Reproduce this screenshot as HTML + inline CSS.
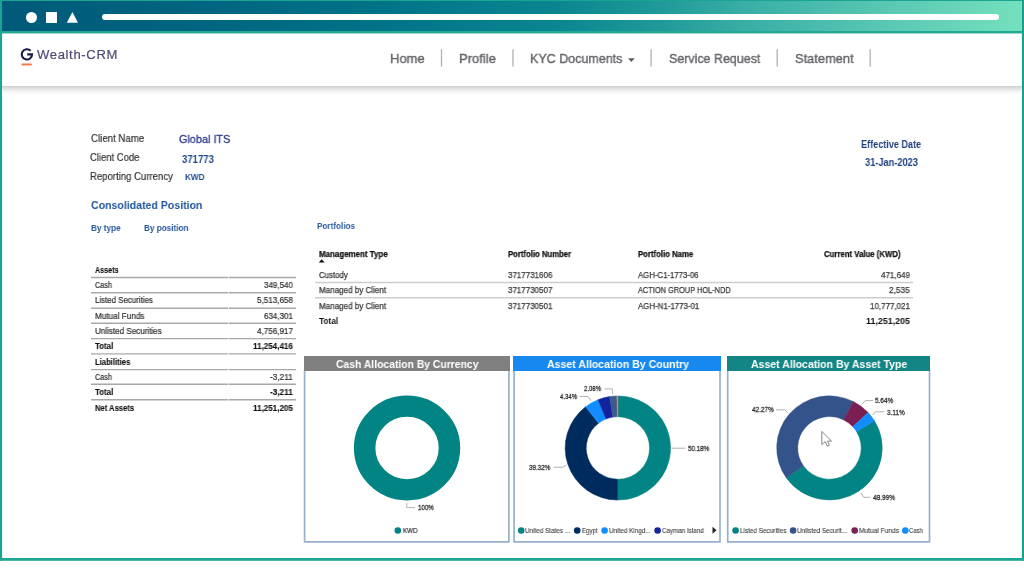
<!DOCTYPE html><html><head><meta charset="utf-8"><style>
*{margin:0;padding:0;box-sizing:border-box}
html,body{width:1024px;height:576px;overflow:hidden;background:#fff}
body{position:relative;font-family:"Liberation Sans",sans-serif}
.t{position:absolute;white-space:nowrap;transform-origin:0 0;will-change:transform}
.a{position:absolute}
</style></head><body><svg class="a" style="left:0;top:0" width="1024" height="576"><rect x="0" y="0" width="1024" height="1.4" fill="#1aa593"/><rect x="0" y="0" width="2.1" height="560.8" fill="#1aa593"/><rect x="1021.9" y="0" width="2.1" height="560.8" fill="#1a9f8f"/><rect x="0" y="558" width="1024" height="2.8" fill="#1ea694"/></svg>
<div class="a" style="left:2px;top:1.3px;width:1020px;height:30px;background:linear-gradient(90deg,#005a79 0%,#006582 20%,#007087 34%,#0a8590 54%,#1e9898 64%,#3aaea6 73%,#5ccab4 88%,#74e0bd 100%)"></div>
<div class="a" style="left:2px;top:30.8px;width:1020px;height:2.2px;background:#22a996"></div>
<div class="a" style="left:2px;top:33px;width:1020px;height:0.7px;background:#9ad6cc"></div>
<div class="a" style="left:26px;top:11.8px;width:11px;height:11px;border-radius:50%;background:#fff"></div>
<div class="a" style="left:46.2px;top:11.9px;width:11.2px;height:10.8px;background:#fff"></div>
<svg class="a" style="left:0;top:0" width="120" height="36"><polygon points="72.4,11.9 78,22.8 66.8,22.8" fill="#fff"/></svg>
<div class="a" style="left:102.2px;top:14.1px;width:897.3px;height:6px;border-radius:3px;background:#fff"></div>
<div class="a" style="left:2px;top:85.8px;width:1020px;height:9px;background:linear-gradient(180deg,#cdcdd2 0%,#dcdce0 20%,#ececee 45%,#f8f8f9 70%,#fff 100%)"></div>
<svg class="a" style="left:0;top:0" width="140" height="90"><path d="M30.6,50.8 A5.15,5.15 0 1 0 32.05,54.4 L27.2,54.4" fill="none" stroke="#1a1842" stroke-width="2.1"/><rect x="21.4" y="63.5" width="10.6" height="2.1" rx="1" fill="#f37b45"/></svg>
<div class="t" style="left:37.20px;top:48.43px;font-size:13.08px;line-height:13.08px;color:#4d4a72;font-weight:normal;transform:scaleX(1.0000);-webkit-text-stroke:0.20px #4d4a72;letter-spacing:0.641px;">Wealth-CRM</div>
<div class="t" style="left:390.25px;top:51.68px;font-size:13.37px;line-height:13.37px;color:#646469;font-weight:normal;transform:scaleX(0.9712);-webkit-text-stroke:0.40px #646469;">Home</div>
<div class="t" style="left:459.40px;top:51.68px;font-size:13.37px;line-height:13.37px;color:#646469;font-weight:normal;transform:scaleX(0.9734);-webkit-text-stroke:0.40px #646469;">Profile</div>
<div class="t" style="left:530.30px;top:51.68px;font-size:13.37px;line-height:13.37px;color:#646469;font-weight:normal;transform:scaleX(0.9358);-webkit-text-stroke:0.40px #646469;">KYC Documents</div>
<div class="t" style="left:668.70px;top:51.68px;font-size:13.37px;line-height:13.37px;color:#646469;font-weight:normal;transform:scaleX(0.9316);-webkit-text-stroke:0.40px #646469;">Service Request</div>
<div class="t" style="left:794.80px;top:51.68px;font-size:13.37px;line-height:13.37px;color:#646469;font-weight:normal;transform:scaleX(0.9614);-webkit-text-stroke:0.40px #646469;">Statement</div>
<svg class="a" style="left:0;top:0" width="900" height="80"><polygon points="628.1,58.3 634.7,58.3 631.4,62" fill="#5a5a5e"/></svg>
<svg class="a" style="left:0;top:0" width="1024" height="80"><line x1="441.5" y1="49.2" x2="441.5" y2="66.5" stroke="#b0b0b3" stroke-width="1.3"/><line x1="513.0" y1="49.2" x2="513.0" y2="66.5" stroke="#b0b0b3" stroke-width="1.3"/><line x1="651.1" y1="49.2" x2="651.1" y2="66.5" stroke="#b0b0b3" stroke-width="1.3"/><line x1="777.2" y1="49.2" x2="777.2" y2="66.5" stroke="#b0b0b3" stroke-width="1.3"/><line x1="870.2" y1="49.2" x2="870.2" y2="66.5" stroke="#b0b0b3" stroke-width="1.3"/></svg>
<div class="t" style="left:90.60px;top:132.92px;font-size:10.61px;line-height:10.61px;color:#333333;font-weight:normal;transform:scaleX(0.9113);-webkit-text-stroke:0.20px #333333;">Client Name</div>
<div class="t" style="left:179.30px;top:133.60px;font-size:11.34px;line-height:11.34px;color:#2b3889;font-weight:normal;transform:scaleX(0.9579);-webkit-text-stroke:0.30px #2b3889;">Global ITS</div>
<div class="t" style="left:90.30px;top:152.37px;font-size:10.90px;line-height:10.90px;color:#333333;font-weight:normal;transform:scaleX(0.8691);-webkit-text-stroke:0.20px #333333;">Client Code</div>
<div class="t" style="left:181.70px;top:154.89px;font-size:10.17px;line-height:10.17px;color:#1f4a88;font-weight:bold;transform:scaleX(0.9425);">371773</div>
<div class="t" style="left:89.90px;top:170.92px;font-size:10.61px;line-height:10.61px;color:#333333;font-weight:normal;transform:scaleX(0.9006);-webkit-text-stroke:0.20px #333333;">Reporting Currency</div>
<div class="t" style="left:184.80px;top:172.95px;font-size:9.16px;line-height:9.16px;color:#1f4f8f;font-weight:bold;transform:scaleX(0.8918);">KWD</div>
<div class="t" style="left:90.60px;top:199.36px;font-size:11.63px;line-height:11.63px;color:#1f5599;font-weight:bold;transform:scaleX(0.9084);">Consolidated Position</div>
<div class="t" style="left:91.40px;top:223.63px;font-size:9.30px;line-height:9.30px;color:#25579b;font-weight:bold;transform:scaleX(0.8810);">By type</div>
<div class="t" style="left:144.30px;top:223.63px;font-size:9.30px;line-height:9.30px;color:#25579b;font-weight:bold;transform:scaleX(0.8767);">By position</div>
<div class="t" style="left:861.25px;top:139.33px;font-size:11.19px;line-height:11.19px;color:#1e3f7c;font-weight:bold;transform:scaleX(0.8126);">Effective Date</div>
<div class="t" style="left:864.50px;top:157.59px;font-size:10.17px;line-height:10.17px;color:#1e3f7c;font-weight:bold;transform:scaleX(0.9097);">31-Jan-2023</div>
<div class="t" style="left:95.25px;top:265.86px;font-size:8.43px;line-height:8.43px;color:#111;font-weight:bold;transform:scaleX(0.8481);-webkit-text-stroke:0.10px #111;">Assets</div>
<div class="t" style="left:95.25px;top:281.16px;font-size:8.43px;line-height:8.43px;color:#2e2e2e;font-weight:normal;transform:scaleX(0.8614);-webkit-text-stroke:0.20px #2e2e2e;">Cash</div>
<div class="t" style="left:264.00px;top:281.16px;font-size:8.43px;line-height:8.43px;color:#2e2e2e;font-weight:normal;transform:scaleX(0.9483);-webkit-text-stroke:0.20px #2e2e2e;">349,540</div>
<div class="t" style="left:95.25px;top:296.46px;font-size:8.43px;line-height:8.43px;color:#2e2e2e;font-weight:normal;transform:scaleX(0.9369);-webkit-text-stroke:0.20px #2e2e2e;">Listed Securities</div>
<div class="t" style="left:256.90px;top:296.46px;font-size:8.43px;line-height:8.43px;color:#2e2e2e;font-weight:normal;transform:scaleX(0.9598);-webkit-text-stroke:0.20px #2e2e2e;">5,513,658</div>
<div class="t" style="left:95.25px;top:311.76px;font-size:8.43px;line-height:8.43px;color:#2e2e2e;font-weight:normal;transform:scaleX(0.9681);-webkit-text-stroke:0.20px #2e2e2e;">Mutual Funds</div>
<div class="t" style="left:264.00px;top:311.76px;font-size:8.43px;line-height:8.43px;color:#2e2e2e;font-weight:normal;transform:scaleX(0.9483);-webkit-text-stroke:0.20px #2e2e2e;">634,301</div>
<div class="t" style="left:95.25px;top:327.06px;font-size:8.43px;line-height:8.43px;color:#2e2e2e;font-weight:normal;transform:scaleX(0.9576);-webkit-text-stroke:0.20px #2e2e2e;">Unlisted Securities</div>
<div class="t" style="left:256.90px;top:327.06px;font-size:8.43px;line-height:8.43px;color:#2e2e2e;font-weight:normal;transform:scaleX(0.9598);-webkit-text-stroke:0.20px #2e2e2e;">4,756,917</div>
<div class="t" style="left:95.25px;top:342.36px;font-size:8.43px;line-height:8.43px;color:#111;font-weight:bold;transform:scaleX(0.9304);-webkit-text-stroke:0.10px #111;">Total</div>
<div class="t" style="left:253.00px;top:342.36px;font-size:8.43px;line-height:8.43px;color:#111;font-weight:bold;transform:scaleX(0.9562);-webkit-text-stroke:0.10px #111;">11,254,416</div>
<div class="t" style="left:95.25px;top:357.66px;font-size:8.43px;line-height:8.43px;color:#111;font-weight:bold;transform:scaleX(0.9066);-webkit-text-stroke:0.10px #111;">Liabilities</div>
<div class="t" style="left:95.25px;top:372.96px;font-size:8.43px;line-height:8.43px;color:#2e2e2e;font-weight:normal;transform:scaleX(0.8614);-webkit-text-stroke:0.20px #2e2e2e;">Cash</div>
<div class="t" style="left:270.10px;top:372.96px;font-size:8.43px;line-height:8.43px;color:#2e2e2e;font-weight:normal;transform:scaleX(0.9796);-webkit-text-stroke:0.20px #2e2e2e;">-3,211</div>
<div class="t" style="left:95.25px;top:388.26px;font-size:8.43px;line-height:8.43px;color:#111;font-weight:bold;transform:scaleX(0.9304);-webkit-text-stroke:0.10px #111;">Total</div>
<div class="t" style="left:270.10px;top:388.26px;font-size:8.43px;line-height:8.43px;color:#111;font-weight:bold;transform:scaleX(0.9729);-webkit-text-stroke:0.10px #111;">-3,211</div>
<div class="t" style="left:95.25px;top:403.56px;font-size:8.43px;line-height:8.43px;color:#111;font-weight:bold;transform:scaleX(0.9049);-webkit-text-stroke:0.10px #111;">Net Assets</div>
<div class="t" style="left:253.00px;top:403.56px;font-size:8.43px;line-height:8.43px;color:#111;font-weight:bold;transform:scaleX(0.9562);-webkit-text-stroke:0.10px #111;">11,251,205</div>
<svg class="a" style="left:0;top:0" width="1024" height="576"><line x1="91" y1="277.5" x2="228" y2="277.5" stroke="#a8a8a8" stroke-width="1.4"/><line x1="228.7" y1="277.5" x2="296" y2="277.5" stroke="#a8a8a8" stroke-width="1.4"/><line x1="91" y1="292.8" x2="228" y2="292.8" stroke="#a8a8a8" stroke-width="1.4"/><line x1="228.7" y1="292.8" x2="296" y2="292.8" stroke="#a8a8a8" stroke-width="1.4"/><line x1="91" y1="308.2" x2="228" y2="308.2" stroke="#a8a8a8" stroke-width="1.4"/><line x1="228.7" y1="308.2" x2="296" y2="308.2" stroke="#a8a8a8" stroke-width="1.4"/><line x1="91" y1="323.2" x2="228" y2="323.2" stroke="#a8a8a8" stroke-width="1.4"/><line x1="228.7" y1="323.2" x2="296" y2="323.2" stroke="#a8a8a8" stroke-width="1.4"/><line x1="91" y1="338.6" x2="228" y2="338.6" stroke="#a8a8a8" stroke-width="1.4"/><line x1="228.7" y1="338.6" x2="296" y2="338.6" stroke="#a8a8a8" stroke-width="1.4"/><line x1="91" y1="353.9" x2="228" y2="353.9" stroke="#a8a8a8" stroke-width="1.4"/><line x1="228.7" y1="353.9" x2="296" y2="353.9" stroke="#a8a8a8" stroke-width="1.4"/><line x1="91" y1="369.6" x2="228" y2="369.6" stroke="#a8a8a8" stroke-width="1.4"/><line x1="228.7" y1="369.6" x2="296" y2="369.6" stroke="#a8a8a8" stroke-width="1.4"/><line x1="91" y1="384.3" x2="228" y2="384.3" stroke="#a8a8a8" stroke-width="1.4"/><line x1="228.7" y1="384.3" x2="296" y2="384.3" stroke="#a8a8a8" stroke-width="1.4"/><line x1="91" y1="399.7" x2="228" y2="399.7" stroke="#a8a8a8" stroke-width="1.4"/><line x1="228.7" y1="399.7" x2="296" y2="399.7" stroke="#a8a8a8" stroke-width="1.4"/></svg>
<div class="t" style="left:317.30px;top:221.20px;font-size:9.45px;line-height:9.45px;color:#2a5b9b;font-weight:bold;transform:scaleX(0.8641);">Portfolios</div>
<div class="t" style="left:318.75px;top:250.16px;font-size:8.43px;line-height:8.43px;color:#111;font-weight:bold;transform:scaleX(0.9428);-webkit-text-stroke:0.25px #111;">Management Type</div>
<div class="t" style="left:508.20px;top:250.16px;font-size:8.43px;line-height:8.43px;color:#111;font-weight:bold;transform:scaleX(0.9165);-webkit-text-stroke:0.25px #111;">Portfolio Number</div>
<div class="t" style="left:638.10px;top:250.16px;font-size:8.43px;line-height:8.43px;color:#111;font-weight:bold;transform:scaleX(0.9207);-webkit-text-stroke:0.25px #111;">Portfolio Name</div>
<div class="t" style="left:823.75px;top:250.16px;font-size:8.43px;line-height:8.43px;color:#111;font-weight:bold;transform:scaleX(0.9234);-webkit-text-stroke:0.25px #111;">Current Value (KWD)</div>
<svg class="a" style="left:0;top:0" width="400" height="270"><polygon points="321.7,259.2 324.7,262.4 318.7,262.4" fill="#111"/></svg>
<div class="t" style="left:318.75px;top:270.76px;font-size:8.43px;line-height:8.43px;color:#3a3a3a;font-weight:normal;transform:scaleX(0.9298);-webkit-text-stroke:0.25px #3a3a3a;">Custody</div>
<div class="t" style="left:508.20px;top:270.76px;font-size:8.43px;line-height:8.43px;color:#3a3a3a;font-weight:normal;transform:scaleX(0.9469);-webkit-text-stroke:0.25px #3a3a3a;">3717731606</div>
<div class="t" style="left:638.10px;top:270.76px;font-size:8.43px;line-height:8.43px;color:#3a3a3a;font-weight:normal;transform:scaleX(0.9238);-webkit-text-stroke:0.25px #3a3a3a;">AGH-C1-1773-06</div>
<div class="t" style="left:881.00px;top:270.76px;font-size:8.43px;line-height:8.43px;color:#3a3a3a;font-weight:normal;transform:scaleX(0.9516);-webkit-text-stroke:0.25px #3a3a3a;">471,649</div>
<div class="t" style="left:318.75px;top:286.16px;font-size:8.43px;line-height:8.43px;color:#3a3a3a;font-weight:normal;transform:scaleX(0.9539);-webkit-text-stroke:0.25px #3a3a3a;">Managed by Client</div>
<div class="t" style="left:508.20px;top:286.16px;font-size:8.43px;line-height:8.43px;color:#3a3a3a;font-weight:normal;transform:scaleX(0.9469);-webkit-text-stroke:0.25px #3a3a3a;">3717730507</div>
<div class="t" style="left:638.10px;top:286.16px;font-size:8.43px;line-height:8.43px;color:#3a3a3a;font-weight:normal;transform:scaleX(0.8780);-webkit-text-stroke:0.25px #3a3a3a;">ACTION GROUP HOL-NDD</div>
<div class="t" style="left:889.40px;top:286.16px;font-size:8.43px;line-height:8.43px;color:#3a3a3a;font-weight:normal;transform:scaleX(0.9767);-webkit-text-stroke:0.25px #3a3a3a;">2,535</div>
<div class="t" style="left:318.75px;top:301.56px;font-size:8.43px;line-height:8.43px;color:#3a3a3a;font-weight:normal;transform:scaleX(0.9539);-webkit-text-stroke:0.25px #3a3a3a;">Managed by Client</div>
<div class="t" style="left:508.20px;top:301.56px;font-size:8.43px;line-height:8.43px;color:#3a3a3a;font-weight:normal;transform:scaleX(0.9469);-webkit-text-stroke:0.25px #3a3a3a;">3717730501</div>
<div class="t" style="left:638.10px;top:301.56px;font-size:8.43px;line-height:8.43px;color:#3a3a3a;font-weight:normal;transform:scaleX(0.9345);-webkit-text-stroke:0.25px #3a3a3a;">AGH-N1-1773-01</div>
<div class="t" style="left:870.00px;top:301.56px;font-size:8.43px;line-height:8.43px;color:#3a3a3a;font-weight:normal;transform:scaleX(0.9480);-webkit-text-stroke:0.25px #3a3a3a;">10,777,021</div>
<div class="t" style="left:318.75px;top:317.17px;font-size:9.01px;line-height:9.01px;color:#111;font-weight:bold;transform:scaleX(0.9231);">Total</div>
<div class="t" style="left:866.00px;top:317.17px;font-size:9.01px;line-height:9.01px;color:#111;font-weight:bold;transform:scaleX(0.9864);">11,251,205</div>
<svg class="a" style="left:0;top:0" width="1024" height="576"><line x1="315" y1="282.4" x2="913" y2="282.4" stroke="#cdcdcd" stroke-width="1.5"/><line x1="315" y1="297.7" x2="913" y2="297.7" stroke="#cdcdcd" stroke-width="1.5"/></svg>
<svg class="a" style="left:0;top:0" width="1024" height="576"><path d="M304.6,370 L304.6,541.8 L508.9,541.8 L508.9,370" fill="none" stroke="#98b0cb" stroke-width="1.7"/></svg>
<div class="a" style="left:303.8px;top:355.8px;width:205.9px;height:15px;background:#808080"></div>
<div class="t" style="left:335.90px;top:358.52px;font-size:10.90px;line-height:10.90px;color:#fff;font-weight:bold;transform:scaleX(0.9511);">Cash Allocation By Currency</div>
<svg class="a" style="left:0;top:0" width="1024" height="576"><path d="M514.1,370 L514.1,541.8 L720.0,541.8 L720.0,370" fill="none" stroke="#98b0cb" stroke-width="1.7"/></svg>
<div class="a" style="left:513.3px;top:355.8px;width:207.5px;height:15px;background:#1688f0"></div>
<div class="t" style="left:547.00px;top:358.52px;font-size:10.90px;line-height:10.90px;color:#fff;font-weight:bold;transform:scaleX(0.9688);">Asset Allocation By Country</div>
<svg class="a" style="left:0;top:0" width="1024" height="576"><path d="M727.7,370 L727.7,541.8 L929.5,541.8 L929.5,370" fill="none" stroke="#98b0cb" stroke-width="1.7"/></svg>
<div class="a" style="left:726.9px;top:355.8px;width:203.4px;height:15px;background:#138585"></div>
<div class="t" style="left:751.30px;top:358.52px;font-size:10.90px;line-height:10.90px;color:#fff;font-weight:bold;transform:scaleX(0.9657);">Asset Allocation By Asset Type</div>
<svg class="a" style="left:0;top:0" width="1024" height="576"><g transform="translate(407.05,448.0) scale(1,0.986) translate(-407.05,-448.0)"><circle cx="407.05" cy="448.0" r="42.4" fill="none" stroke="#038484" stroke-width="21.5"/></g><g transform="translate(618.0,448.0) scale(1,0.986) translate(-618.0,-448.0)"><path d="M618.00,395.15 A52.85,52.85 0 1 1 617.40,500.85 L617.64,479.75 A31.75,31.75 0 1 0 618.00,416.25 Z" fill="#038484" stroke="#038484" stroke-width="0.5"/><path d="M617.40,500.85 A52.85,52.85 0 0 1 585.61,406.24 L598.54,422.91 A31.75,31.75 0 0 0 617.64,479.75 Z" fill="#002b5e" stroke="#002b5e" stroke-width="0.5"/><path d="M585.61,406.24 A52.85,52.85 0 0 1 598.05,399.06 L606.02,418.60 A31.75,31.75 0 0 0 598.54,422.91 Z" fill="#118dff" stroke="#118dff" stroke-width="0.5"/><path d="M598.05,399.06 A52.85,52.85 0 0 1 609.54,395.83 L612.92,416.66 A31.75,31.75 0 0 0 606.02,418.60 Z" fill="#12239e" stroke="#12239e" stroke-width="0.5"/><path d="M609.54,395.83 A52.85,52.85 0 0 1 616.87,395.16 L617.32,416.26 A31.75,31.75 0 0 0 612.92,416.66 Z" fill="#3b5a8e" stroke="#3b5a8e" stroke-width="0.5"/><path d="M616.87,395.16 A52.85,52.85 0 0 1 618.00,395.15 L618.00,416.25 A31.75,31.75 0 0 0 617.32,416.26 Z" fill="#e0805a" stroke="#e0805a" stroke-width="0.5"/></g><g transform="translate(829.45,447.9) scale(1,0.986) translate(-829.45,-447.9)"><path d="M874.38,420.26 A52.75,52.75 0 0 1 786.36,478.33 L803.52,466.22 A31.75,31.75 0 0 0 856.49,431.26 Z" fill="#038484" stroke="#038484" stroke-width="0.5"/><path d="M786.36,478.33 A52.75,52.75 0 0 1 853.35,400.87 L843.83,419.59 A31.75,31.75 0 0 0 803.52,466.22 Z" fill="#34538a" stroke="#34538a" stroke-width="0.5"/><path d="M853.35,400.87 A52.75,52.75 0 0 1 868.18,412.09 L852.76,426.34 A31.75,31.75 0 0 0 843.83,419.59 Z" fill="#7b1f52" stroke="#7b1f52" stroke-width="0.5"/><path d="M868.18,412.09 A52.75,52.75 0 0 1 874.40,420.29 L856.50,431.28 A31.75,31.75 0 0 0 852.76,426.34 Z" fill="#118dff" stroke="#118dff" stroke-width="0.5"/></g><polyline points="406.8,502.8 406.8,507.6 415,507.6" fill="none" stroke="#a8a8a8" stroke-width="0.9"/><polyline points="671.5,448.2 685.2,448.2" fill="none" stroke="#a8a8a8" stroke-width="0.9"/><polyline points="553.5,467.3 562.5,467.3 566.2,465.2" fill="none" stroke="#a8a8a8" stroke-width="0.9"/><polyline points="579.5,396.4 588,396.4 591,400.5" fill="none" stroke="#a8a8a8" stroke-width="0.9"/><polyline points="604.6,388.9 612.3,388.9 612.5,394" fill="none" stroke="#a8a8a8" stroke-width="0.9"/><polyline points="861.8,404.4 865.2,400.6 873.1,400.6" fill="none" stroke="#a8a8a8" stroke-width="0.9"/><polyline points="872.6,415 875.3,411.8 884.4,411.8" fill="none" stroke="#a8a8a8" stroke-width="0.9"/><polyline points="776.1,409.8 784.7,409.8 787.8,412.7" fill="none" stroke="#a8a8a8" stroke-width="0.9"/><polyline points="860.7,492.8 863.6,497.3 870.4,497.3" fill="none" stroke="#a8a8a8" stroke-width="0.9"/><circle cx="397.8" cy="530.5" r="3.3" fill="#038484"/><circle cx="521.2" cy="530.5" r="3.3" fill="#038484"/><circle cx="577.2" cy="530.5" r="3.3" fill="#002b5e"/><circle cx="604.6" cy="530.5" r="3.3" fill="#118dff"/><circle cx="657.6" cy="530.5" r="3.3" fill="#12239e"/><circle cx="735.6" cy="530.5" r="3.3" fill="#038484"/><circle cx="793.1" cy="530.5" r="3.3" fill="#34538a"/><circle cx="854.7" cy="530.5" r="3.3" fill="#7b1f52"/><circle cx="905.3" cy="530.5" r="3.3" fill="#118dff"/><polygon points="712.5,526.8 716.5,530.3 712.5,533.8" fill="#222"/><path d="M821.8,431.4 L821.8,444.6 L825.2,441.6 L827.3,446.2 L829.4,445.2 L827.5,441.1 L831.6,441.1 Z" fill="#fff" stroke="#858585" stroke-width="1.0" stroke-linejoin="round"/></svg>
<div class="t" style="left:417.80px;top:504.20px;font-size:7.56px;line-height:7.56px;color:#2e2e2e;font-weight:normal;transform:scaleX(0.8172);-webkit-text-stroke:0.30px #2e2e2e;">100%</div>
<div class="t" style="left:402.50px;top:526.85px;font-size:7.27px;line-height:7.27px;color:#2e2e2e;font-weight:normal;transform:scaleX(0.8552);-webkit-text-stroke:0.20px #2e2e2e;">KWD</div>
<div class="t" style="left:688.40px;top:444.60px;font-size:7.56px;line-height:7.56px;color:#2e2e2e;font-weight:normal;transform:scaleX(0.8230);-webkit-text-stroke:0.30px #2e2e2e;">50.18%</div>
<div class="t" style="left:529.20px;top:463.60px;font-size:7.56px;line-height:7.56px;color:#2e2e2e;font-weight:normal;transform:scaleX(0.8269);-webkit-text-stroke:0.30px #2e2e2e;">39.32%</div>
<div class="t" style="left:560.10px;top:392.60px;font-size:7.56px;line-height:7.56px;color:#2e2e2e;font-weight:normal;transform:scaleX(0.7934);-webkit-text-stroke:0.30px #2e2e2e;">4.34%</div>
<div class="t" style="left:584.40px;top:385.10px;font-size:7.56px;line-height:7.56px;color:#2e2e2e;font-weight:normal;transform:scaleX(0.7934);-webkit-text-stroke:0.30px #2e2e2e;">2.08%</div>
<div class="t" style="left:875.30px;top:397.20px;font-size:7.56px;line-height:7.56px;color:#2e2e2e;font-weight:normal;transform:scaleX(0.8447);-webkit-text-stroke:0.30px #2e2e2e;">5.64%</div>
<div class="t" style="left:887.00px;top:408.60px;font-size:7.56px;line-height:7.56px;color:#2e2e2e;font-weight:normal;transform:scaleX(0.8482);-webkit-text-stroke:0.30px #2e2e2e;">3.11%</div>
<div class="t" style="left:751.70px;top:406.00px;font-size:7.56px;line-height:7.56px;color:#2e2e2e;font-weight:normal;transform:scaleX(0.8464);-webkit-text-stroke:0.30px #2e2e2e;">42.27%</div>
<div class="t" style="left:872.60px;top:493.60px;font-size:7.56px;line-height:7.56px;color:#2e2e2e;font-weight:normal;transform:scaleX(0.8542);-webkit-text-stroke:0.30px #2e2e2e;">48.99%</div>
<div class="t" style="left:525.30px;top:526.85px;font-size:7.27px;line-height:7.27px;color:#3a3a3a;font-weight:normal;transform:scaleX(0.8722);-webkit-text-stroke:0.10px #3a3a3a;">United States ...</div>
<div class="t" style="left:582.10px;top:526.85px;font-size:7.27px;line-height:7.27px;color:#3a3a3a;font-weight:normal;transform:scaleX(0.8395);-webkit-text-stroke:0.10px #3a3a3a;">Egypt</div>
<div class="t" style="left:608.70px;top:526.85px;font-size:7.27px;line-height:7.27px;color:#3a3a3a;font-weight:normal;transform:scaleX(0.8747);-webkit-text-stroke:0.10px #3a3a3a;">United Kingd...</div>
<div class="t" style="left:662.00px;top:526.85px;font-size:7.27px;line-height:7.27px;color:#3a3a3a;font-weight:normal;transform:scaleX(0.8603);-webkit-text-stroke:0.10px #3a3a3a;">Cayman Island</div>
<div class="t" style="left:739.60px;top:526.85px;font-size:7.27px;line-height:7.27px;color:#3a3a3a;font-weight:normal;transform:scaleX(0.8739);-webkit-text-stroke:0.10px #3a3a3a;">Listed Securities</div>
<div class="t" style="left:797.30px;top:526.85px;font-size:7.27px;line-height:7.27px;color:#3a3a3a;font-weight:normal;transform:scaleX(0.8815);-webkit-text-stroke:0.10px #3a3a3a;">Unlisted Securit...</div>
<div class="t" style="left:858.90px;top:526.85px;font-size:7.27px;line-height:7.27px;color:#3a3a3a;font-weight:normal;transform:scaleX(0.9084);-webkit-text-stroke:0.10px #3a3a3a;">Mutual Funds</div>
<div class="t" style="left:909.30px;top:526.85px;font-size:7.27px;line-height:7.27px;color:#3a3a3a;font-weight:normal;transform:scaleX(0.8195);-webkit-text-stroke:0.10px #3a3a3a;">Cash</div></body></html>
